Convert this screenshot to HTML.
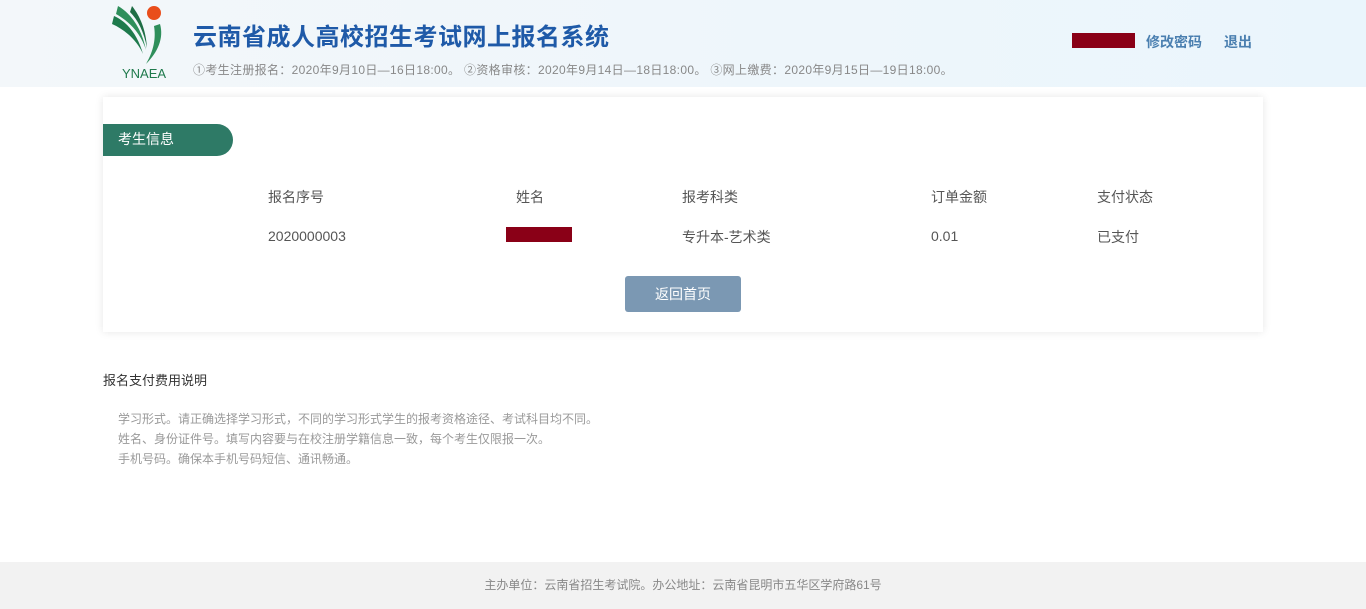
<!DOCTYPE html>
<html><head><meta charset="utf-8"><style>
*{margin:0;padding:0;box-sizing:border-box}
body{width:1366px;height:609px;position:relative;background:#fff;font-family:"Liberation Sans","Noto Sans CJK SC",sans-serif;overflow:hidden}
.a{position:absolute;white-space:nowrap}
#hd{position:absolute;left:0;top:0;width:1366px;height:87px;background:linear-gradient(90deg,#f3f7fa,#eef6fb 60%,#eaf5fc)}
.card{position:absolute;left:103px;top:97px;width:1160px;height:235px;background:#fff;box-shadow:0 0 8px rgba(0,0,0,0.1)}
.t{font-size:14px;color:#555}
#ft{position:absolute;left:0;top:562px;width:1366px;height:47px;background:#f2f2f2;font-size:12px;color:#888;text-align:center;line-height:47px}
</style></head><body>
<div id="hd"></div>
<svg class="a" style="left:108px;top:4px" width="66" height="66" viewBox="0 0 66 66">
<circle cx="46" cy="9" r="7" fill="#e94e1b"/>
<path d="M6 12 C20 18 30 32 35 50 C30 38 18 26 4 20 Z" fill="#1e7a4c"/>
<path d="M10 2 C24 10 34 26 38 46 C33 30 22 18 8 10 Z" fill="#2f8f5b"/>
<path d="M24 2 C32 12 38 26 39 44 C36 28 30 16 22 8 Z" fill="#1f6e45"/>
<path d="M52 20 C56 34 50 48 38 60 C46 46 48 34 46 22 Z" fill="#2f8f5b"/>
</svg>
<div class="a" style="left:122px;top:66px;font-size:13px;color:#1f7a4c">YNAEA</div>
<div class="a" style="left:193px;top:17px;font-size:24px;font-weight:bold;color:#1f5aa8;letter-spacing:0.5px">云南省成人高校招生考试网上报名系统</div>
<div class="a" style="left:193px;top:61px;font-size:12px;color:#888;letter-spacing:0.33px">①考生注册报名：2020年9月10日—16日18:00。 ②资格审核：2020年9月14日—18日18:00。 ③网上缴费：2020年9月15日—19日18:00。</div>
<div class="a" style="left:1072px;top:33px;width:63px;height:15px;background:#8a0017"></div>
<div class="a" style="left:1146px;top:32px;font-size:14px;font-weight:bold;color:#4a7fb0">修改密码</div>
<div class="a" style="left:1224px;top:32px;font-size:14px;font-weight:bold;color:#4a7fb0">退出</div>
<div class="card">
<div class="a" style="left:0;top:27px;width:130px;height:32px;background:#2e7a66;border-radius:0 16px 16px 0;color:#fff;font-size:14px;line-height:30px;padding-left:15px">考生信息</div>
<div class="a t" style="left:165px;top:90px">报名序号</div>
<div class="a t" style="left:413px;top:90px">姓名</div>
<div class="a t" style="left:579px;top:90px">报考科类</div>
<div class="a t" style="left:828px;top:90px">订单金额</div>
<div class="a t" style="left:994px;top:90px">支付状态</div>
<div class="a t" style="left:165px;top:131px">2020000003</div>
<div class="a" style="left:403px;top:130px;width:66px;height:15px;background:#8a0017"></div>
<div class="a t" style="left:579px;top:130px">专升本-艺术类</div>
<div class="a t" style="left:828px;top:131px">0.01</div>
<div class="a t" style="left:994px;top:130px">已支付</div>
<div class="a" style="left:522px;top:179px;width:116px;height:36px;background:#7b98b3;border-radius:3px;color:#fff;font-size:14px;text-align:center;line-height:36px">返回首页</div>
</div>
<div class="a" style="left:103px;top:370px;font-size:13px;color:#333">报名支付费用说明</div>
<div class="a" style="left:118px;top:409px;font-size:12px;color:#999;line-height:20px">学习形式。请正确选择学习形式，不同的学习形式学生的报考资格途径、考试科目均不同。<br>姓名、身份证件号。填写内容要与在校注册学籍信息一致，每个考生仅限报一次。<br>手机号码。确保本手机号码短信、通讯畅通。</div>
<div id="ft">主办单位：云南省招生考试院。办公地址：云南省昆明市五华区学府路61号</div>
</body></html>
